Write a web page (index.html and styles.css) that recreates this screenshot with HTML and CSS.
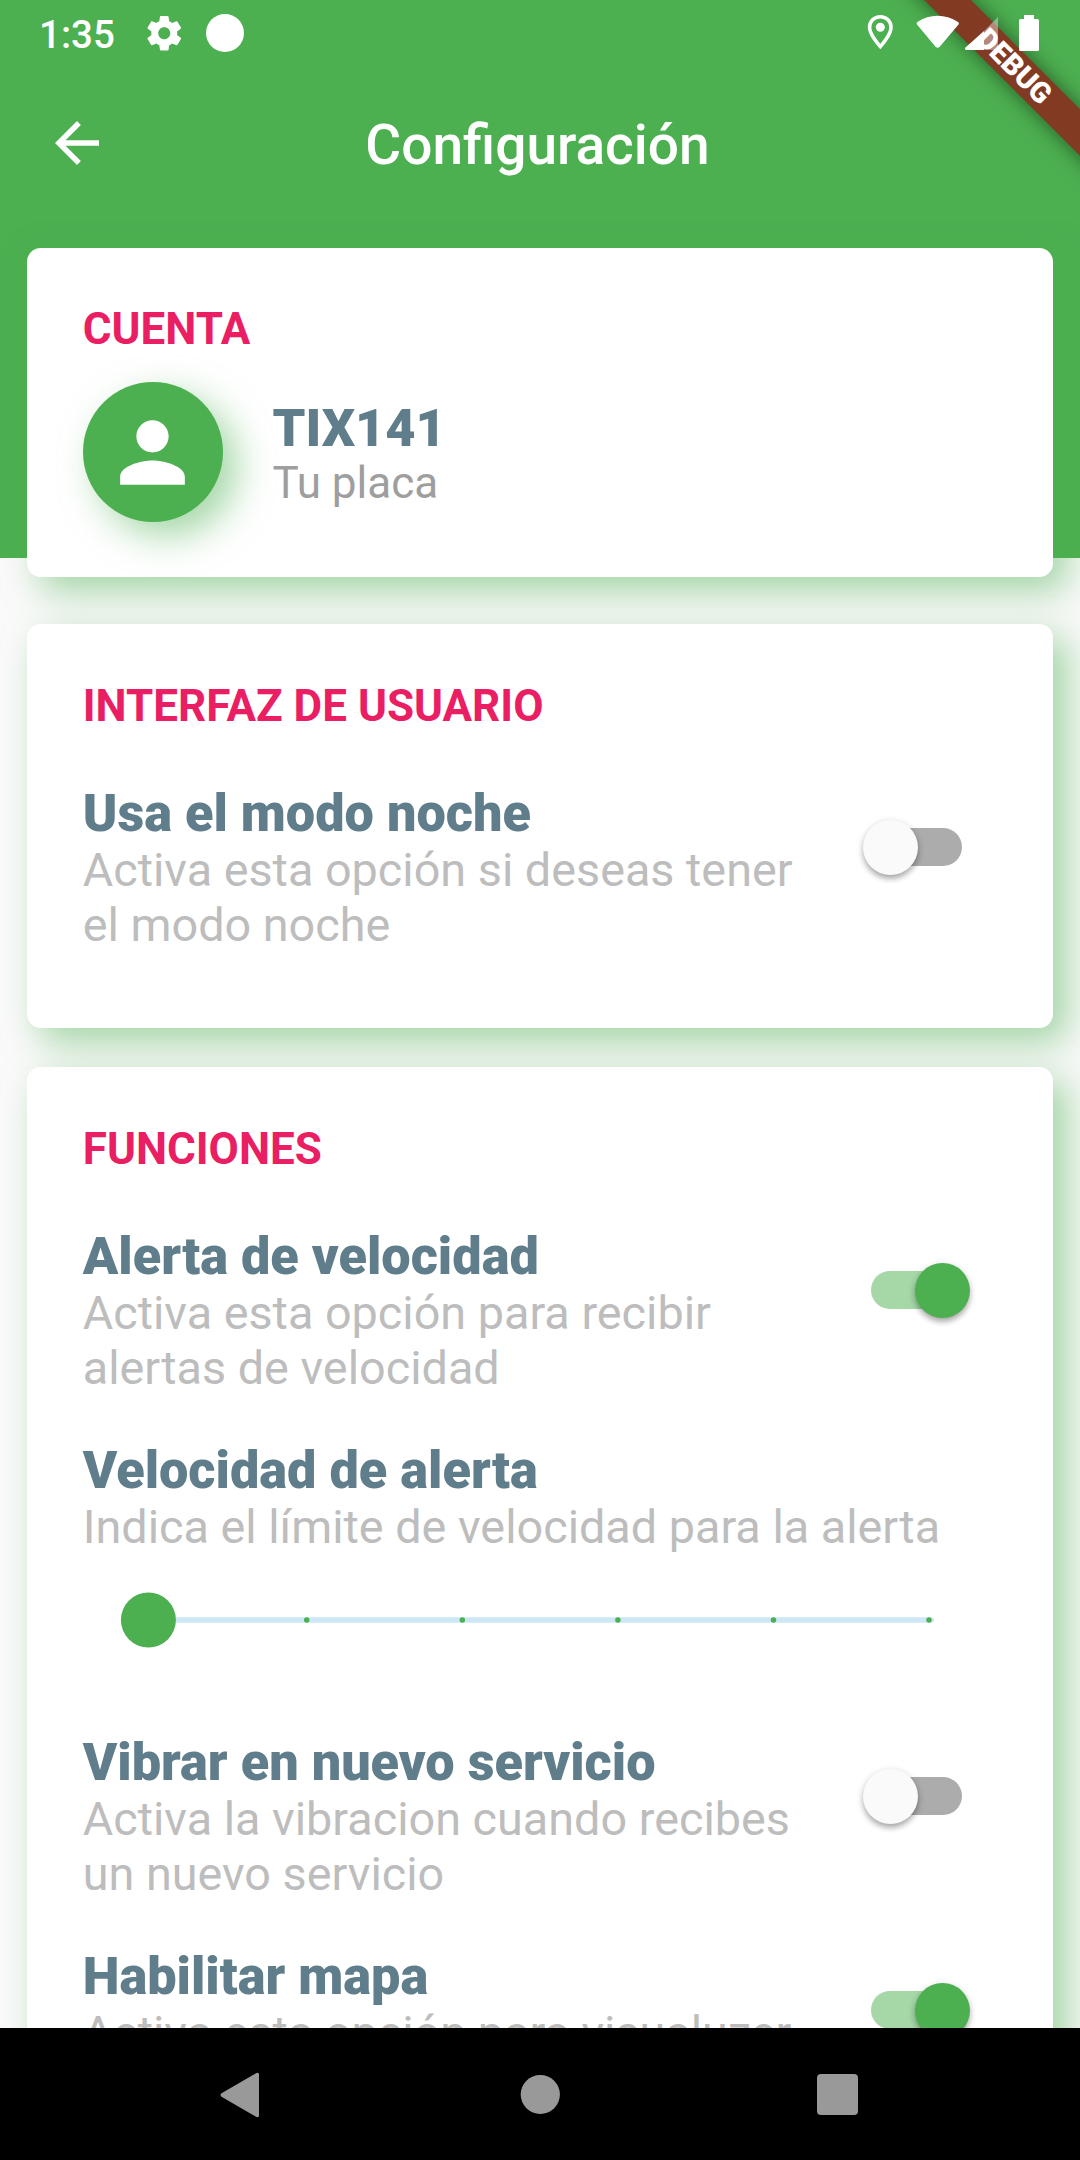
FILE: index.html
```html
<!DOCTYPE html>
<html lang="es">
<head>
<meta charset="utf-8">
<title>Configuración</title>
<link rel="stylesheet" href="styles.css">
</head>
<body>
<div class="screen">
  <div class="banner">DEBUG</div>
  <div class="status">
    <span class="time">1:35</span>
    <svg class="gear" viewBox="2 2 20 20"><path d="M19.43 12.98c.04-.32.07-.64.07-.98s-.03-.66-.07-.98l2.11-1.65c.19-.15.24-.42.12-.64l-2-3.46c-.12-.22-.39-.3-.61-.22l-2.49 1c-.52-.4-1.08-.73-1.69-.98l-.38-2.65A.49.49 0 0 0 14 2h-4c-.25 0-.46.18-.49.42l-.38 2.65c-.61.25-1.17.59-1.69.98l-2.49-1c-.23-.09-.49 0-.61.22l-2 3.46c-.13.22-.07.49.12.64l2.11 1.65c-.04.32-.07.65-.07.98s.03.66.07.98l-2.11 1.65c-.19.15-.24.42-.12.64l2 3.46c.12.22.39.3.61.22l2.49-1c.52.4 1.08.73 1.69.98l.38 2.65c.03.24.24.42.49.42h4c.25 0 .46-.18.49-.42l.38-2.65c.61-.25 1.17-.59 1.69-.98l2.49 1c.23.09.49 0 .61-.22l2-3.46c.12-.22.07-.49-.12-.64l-2.11-1.65zM12 15.5c-1.93 0-3.5-1.57-3.5-3.5s1.57-3.5 3.5-3.5 3.5 1.57 3.5 3.5-1.57 3.5-3.5 3.5z"/></svg>
    <span class="dot"></span>
    <svg class="system" width="172" height="38" viewBox="867 14 172 38">
      <path d="M880.3 16.7c-6.200 0-10.700 4.700-10.700 10.700 0 7.500 10.700 19.200 10.700 19.200s10.700-11.700 10.700-19.200c0-6-4.500-10.700-10.700-10.700z" fill="none" stroke="#fff" stroke-width="3.600"/>
      <circle cx="880.3" cy="27.300" r="4.500"/>
      <path d="M917 24.500q-1-1.500.5-2.500c12-8.500 28-8.500 40.500 0q1.500 1 .5 2.500l-19 22.500q-1.900 1.600-3.800 0z"/>
      <path d="M998 17v31.500q0 1.500-1.500 1.500H984V31z" opacity=".4"/>
      <path d="M984 31v19h-17.500q-2.500-.5-1-2.500z"/>
      <path d="M1024 15h10v4h3.500q1.500 0 1.500 1.500v29q0 1.500-1.500 1.500h-17q-1.500 0-1.500-1.500v-29q0-1.500 1.500-1.500h3.500z"/>
    </svg>
  </div>
  <header class="appbar">
    <svg class="back" viewBox="0 0 24 24"><path d="M20 11H7.830l5.590-5.590L12 4l-8 8 8 8 1.410-1.410L7.830 13H20v-2z"/></svg>
    <h1>Configuración</h1>
  </header>
  <main class="content">
    <section class="card account">
      <h2>CUENTA</h2>
      <div class="profile">
        <div class="avatar"><svg viewBox="0 0 24 24"><path d="M12 12c2.210 0 4-1.790 4-4s-1.790-4-4-4-4 1.790-4 4 1.790 4 4 4zm0 2c-2.670 0-8 1.340-8 4v2h16v-2c0-2.660-5.330-4-8-4z"/></svg></div>
        <div class="who"><h3>TIX141</h3><p>Tu placa</p></div>
      </div>
    </section>
    <section class="card interface">
      <h2>INTERFAZ DE USUARIO</h2>
      <div class="item">
        <div><h3>Usa el modo noche</h3><p>Activa esta opción si deseas tener<br>el modo noche</p></div>
        <div class="switch"><i></i></div>
      </div>
    </section>
    <section class="card functions">
      <h2>FUNCIONES</h2>
      <div class="item">
        <div><h3>Alerta de velocidad</h3><p>Activa esta opción para recibir<br>alertas de velocidad</p></div>
        <div class="switch on"><i></i></div>
      </div>
      <div class="speed">
        <h3>Velocidad de alerta</h3>
        <p>Indica el límite de velocidad para la alerta</p>
        <svg class="slider" width="820" height="56" viewBox="120 1592 820 56">
          <rect x="148" y="1617.250" width="786" height="5.500" rx="2.750" fill="#cde7f7"/>
          <circle cx="306.700" cy="1620" r="2.750"/><circle cx="462.300" cy="1620" r="2.750"/><circle cx="617.900" cy="1620" r="2.750"/><circle cx="773.500" cy="1620" r="2.750"/><circle cx="929" cy="1620" r="2.750"/>
          <circle cx="148.400" cy="1620" r="27.500"/>
        </svg>
      </div>
      <div class="item">
        <div><h3>Vibrar en nuevo servicio</h3><p>Activa la vibracion cuando recibes<br>un nuevo servicio</p></div>
        <div class="switch"><i></i></div>
      </div>
      <div class="item">
        <div><h3>Habilitar mapa</h3><p>Activa esta opción para visualuzer</p></div>
        <div class="switch on"><i></i></div>
      </div>
    </section>
  </main>
  <nav class="navbar">
    <svg width="640" height="48" viewBox="219 2070 640 48">
      <path d="M256.500 2073q2.500-1 2.500 1.500v41q0 2.500-2.500 1.500l-35-20.300q-2-1.700 0-3.400z"/>
      <circle cx="540.300" cy="2094.500" r="19.600"/>
      <rect x="817" y="2074" width="41" height="41" rx="4"/>
    </svg>
  </nav>
</div>
</body>
</html>
```
FILE: styles.css
```css
* { box-sizing: border-box; }
body { margin: 0; font-family: Roboto, "Liberation Sans", sans-serif; }
h1, h2, h3, p { margin: 0; }
svg { display: block; fill: #fff; flex: none; }

.screen {
  position: relative;
  width: 1080px;
  height: 2160px;
  overflow: hidden;
  display: flex;
  flex-direction: column;
  background: linear-gradient(#4caf50 558px, #fafafa 558px);
}

.banner {
  position: absolute;
  left: 814px;
  top: 49.500px;
  width: 400px;
  height: 33px;
  transform: rotate(45deg);
  background: #823a23;
  box-shadow: 0 0 20px rgba(0, 0, 0, .5);
  color: #fff;
  font-size: 29px;
  font-weight: 900;
  line-height: 33px;
  text-align: center;
}

.status {
  position: relative;
  height: 66px;
  flex: none;
  display: flex;
  align-items: flex-start;
  padding: 0 41px 0 39px;
}
.time { width: 108px; margin-top: 12px; font-size: 38.500px; line-height: 46px; font-weight: 500; color: #fff; }
.gear { width: 34.500px; height: 34.500px; margin-top: 16px; }
.dot { width: 38px; height: 38px; margin: 14px 0 0 24.500px; border-radius: 50%; background: #fff; }
.system { margin: 14px 0 0 auto; }

.appbar {
  height: 154px;
  flex: none;
  display: grid;
  grid-template-columns: 66px 1fr 66px;
  align-items: center;
  padding: 0 44px;
}
.back { width: 66px; height: 66px; }
.appbar h1 { padding-top: 4px; padding-right: 5px; font-size: 55px; line-height: 64px; font-weight: 500; color: #fff; text-align: center; }

.content { flex: 1; min-height: 0; padding: 27.500px 27.500px 0 27.400px; overflow: hidden; }
.card {
  background: #fff;
  border-radius: 13.750px;
  padding: 56px 55px 0 55.350px;
  box-shadow: 13.750px 13.750px 36px rgba(76, 175, 80, .5);
}
.account { height: 329.500px; padding-top: 55px; margin-bottom: 47px; }
.interface { height: 404px; margin-bottom: 39px; }
.functions { height: 1200px; }

h2 { color: #e91e63; font-size: 44px; line-height: 52px; font-weight: 700; }
h3 { color: #607d8b; font-size: 52.250px; line-height: 59px; font-weight: 900; }
p { color: #bdbdbd; font-size: 46.750px; line-height: 55px; white-space: nowrap; }

.profile { display: flex; align-items: center; gap: 49.500px; margin-top: 27.500px; }
.avatar {
  width: 140.250px;
  height: 140.250px;
  border-radius: 50%;
  background: #4caf50;
  display: grid;
  place-items: center;
  box-shadow: 13.750px 13.750px 36px rgba(76, 175, 80, .5);
}
.avatar svg { width: 97px; height: 97px; }
.who { padding-top: 2px; }
.who p { color: #9e9e9e; font-size: 44px; line-height: 50px; }

.item { display: flex; justify-content: space-between; height: 169px; margin: 51.500px 27.500px 45px 0; }
.item + .item { margin-top: 0; }
.speed { height: 292px; }
.speed + .item { margin-top: 0; }
.slider { margin: 37px 0 0 37.500px; fill: #4caf50; }

.switch {
  position: relative;
  width: 107.500px;
  height: 55px;
  margin-top: 36px;
  display: flex;
}
.switch::before {
  content: "";
  position: absolute;
  left: 8.500px;
  top: 8.250px;
  width: 91px;
  height: 38.500px;
  border-radius: 20px;
  background: #acacac;
}
.switch i {
  position: relative;
  width: 55px;
  height: 55px;
  border-radius: 50%;
  background: #fafafa;
  box-shadow: 0 5px 6px -2px rgba(0, 0, 0, .2), 0 3px 6px rgba(0, 0, 0, .14), 0 2px 9px rgba(0, 0, 0, .12);
}
.switch.on { justify-content: flex-end; }
.switch.on::before { background: #a5d7a7; }
.switch.on i { background: #4caf50; }

.navbar { height: 132px; flex: none; background: #000; display: flex; justify-content: center; align-items: center; padding-right: 2px; }
.navbar svg { fill: #999; }
```
